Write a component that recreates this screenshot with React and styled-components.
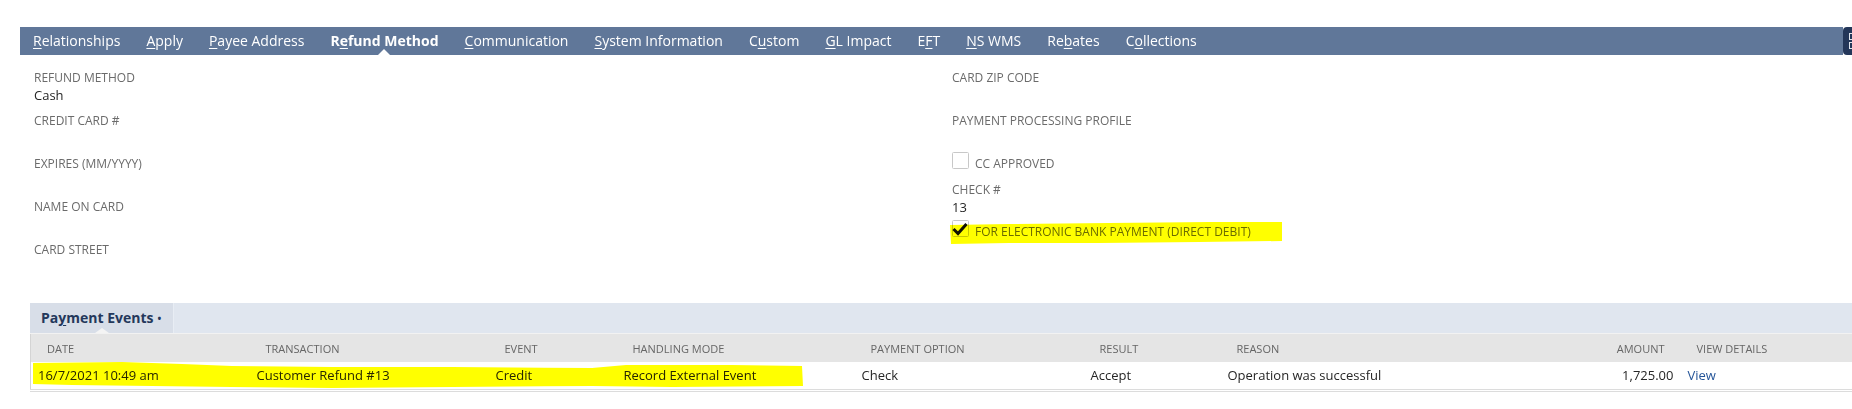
import styled, { createGlobalStyle } from 'styled-components';

const GlobalStyle = createGlobalStyle`
  body {
    margin: 0;
    background: #fff;
    font-family: "Open Sans", "Liberation Sans", sans-serif;
    overflow: hidden;
  }
`;

const Page = styled.div`
  width: 1870px;
  padding: 27px 0 0 20px;
  box-sizing: border-box;
`;

const TabBar = styled.div`
  display: flex;
  height: 28px;
`;

const Tabs = styled.div`
  flex: 1;
  display: flex;
  background: #607799;
`;

const Tab = styled.div`
  position: relative;
  padding: 0 13px;
  line-height: 28px;
  font-size: 14px;
  color: #fff;
  font-weight: ${(p) => (p.$active ? 700 : 400)};
  white-space: nowrap;

  &::after {
    content: '';
    display: ${(p) => (p.$active ? 'block' : 'none')};
    position: absolute;
    left: 50%;
    bottom: 0;
    margin-left: -6px;
    border-left: 6px solid transparent;
    border-right: 6px solid transparent;
    border-bottom: 6px solid #fff;
  }
`;

const Key = styled.span`
  text-decoration: underline;
  text-underline-offset: 2px;
`;

const ExpandButton = styled.div`
  width: 27px;
  box-sizing: border-box;
  background: #233659;
  border-radius: 4px 0 0 4px;
  display: flex;
  align-items: center;
  padding-left: 6px;
`;

const FieldGrid = styled.div`
  display: grid;
  grid-template-columns: 918px 1fr;
  padding: 15px 0 0 14px;
`;

const Column = styled.div`
  display: flex;
  flex-direction: column;
`;

const Field = styled.div`
  margin-bottom: ${(p) => p.$mb ?? 9}px;
`;

const Label = styled.div`
  font-size: 12px;
  line-height: 16px;
  color: #6b6b6b;
  text-transform: uppercase;
`;

const Value = styled.div`
  font-size: 13px;
  line-height: 18px;
  min-height: 18px;
  color: #262626;
`;

const CheckRow = styled.div`
  position: relative;
  display: flex;
  align-items: flex-end;
  gap: 6px;
  height: 17px;
  margin-top: ${(p) => p.$mt ?? 0}px;
  margin-bottom: ${(p) => p.$mb ?? 0}px;
`;

const CheckLabel = styled.span`
  font-size: 12px;
  line-height: 14px;
  margin-bottom: -2px;
  color: #6b6b6b;
  text-transform: uppercase;
  white-space: nowrap;
`;

const Marker = styled.svg`
  position: absolute;
  left: ${(p) => p.$x}px;
  top: ${(p) => p.$y}px;
  mix-blend-mode: multiply;
  pointer-events: none;
`;

const Section = styled.div`
  margin: 18px 0 0 10px;
`;

const SectionHeader = styled.div`
  display: flex;
  height: 30px;
  background: #e0e6ef;
`;

const SectionTab = styled.div`
  position: relative;
  padding: 0 12px 0 11px;
  background: #d8dee8;
  border-right: 1px solid #e8edf4;
  line-height: 30px;
  font-size: 14px;
  font-weight: 700;
  color: #24385b;

  &::after {
    content: '';
    position: absolute;
    left: 50%;
    bottom: 0;
    margin-left: -7px;
    border-left: 7px solid transparent;
    border-right: 7px solid transparent;
    border-bottom: 5px solid #f4f4f4;
  }
`;

const Dot = styled.span`
  font-size: 10px;
  margin-left: 4px;
  vertical-align: 1px;
`;

const TableWrap = styled.div`
  position: relative;
`;

const Table = styled.table`
  width: 100%;
  table-layout: fixed;
  border-collapse: collapse;
  border-left: 1px solid #d4d4d4;
`;

const HeadCell = styled.th`
  height: 28px;
  padding: 0 16px;
  background: #e5e5e5;
  border-top: 1px solid #f2f2f2;
  font-size: 11px;
  font-weight: 400;
  color: #666;
  text-align: ${(p) => p.$align || 'left'};
  white-space: nowrap;
`;

const Cell = styled.td`
  height: 26px;
  padding: 0 7px 1px;
  font-size: 13px;
  color: #262626;
  text-align: ${(p) => p.$align || 'left'};
  white-space: nowrap;
  border-bottom: 3px double #dcdcdc;
`;

const Link = styled.span`
  color: #255599;
`;

const tabs = [
  { pre: '', key: 'R', post: 'elationships' },
  { pre: '', key: 'A', post: 'pply' },
  { pre: '', key: 'P', post: 'ayee Address' },
  { pre: 'R', key: 'e', post: 'fund Method', active: true },
  { pre: '', key: 'C', post: 'ommunication' },
  { pre: '', key: 'S', post: 'ystem Information' },
  { pre: 'C', key: 'u', post: 'stom' },
  { pre: '', key: 'G', post: 'L Impact' },
  { pre: 'E', key: 'F', post: 'T' },
  { pre: '', key: 'N', post: 'S WMS' },
  { pre: 'Re', key: 'b', post: 'ates' },
  { pre: 'C', key: 'o', post: 'llections' },
];

const columns = [
  { title: 'Date', width: 219 },
  { title: 'Transaction', width: 239 },
  { title: 'Event', width: 128 },
  { title: 'Handling Mode', width: 238 },
  { title: 'Payment Option', width: 229 },
  { title: 'Result', width: 137 },
  { title: 'Reason', width: 339 },
  { title: 'Amount', width: 121, align: 'right' },
  { title: 'View Details', width: 110 },
  { title: '' },
];

const Checkbox = ({ checked }) => (
  <svg width="17" height="17" viewBox="0 0 17 17">
    <rect x="0.5" y="0.5" width="16" height="16" rx="1" fill="#fff" stroke="#c8c8c8" />
    {checked && (
      <polyline points="1.5,9 6,13.5 14.5,4" fill="none" stroke="#111" strokeWidth="3" />
    )}
  </svg>
);

const App = () => {
  return (
    <Page>
      <GlobalStyle />
      <TabBar>
        <Tabs>
          {tabs.map((t) => (
            <Tab key={t.post} $active={t.active}>
              {t.pre}
              <Key>{t.key}</Key>
              {t.post}
            </Tab>
          ))}
        </Tabs>
        <ExpandButton>
          <svg width="10" height="18" viewBox="0 0 10 18">
            <rect x="0.5" y="1.5" width="7" height="6" fill="none" stroke="#dfe5ee" />
            <rect x="0.5" y="10.5" width="7" height="6" fill="none" stroke="#dfe5ee" />
          </svg>
        </ExpandButton>
      </TabBar>

      <FieldGrid>
        <Column>
          <Field>
            <Label>Refund Method</Label>
            <Value>Cash</Value>
          </Field>
          <Field>
            <Label>Credit Card #</Label>
            <Value />
          </Field>
          <Field>
            <Label>Expires (MM/YYYY)</Label>
            <Value />
          </Field>
          <Field>
            <Label>Name on Card</Label>
            <Value />
          </Field>
          <Field>
            <Label>Card Street</Label>
            <Value />
          </Field>
        </Column>
        <Column>
          <Field>
            <Label>Card Zip Code</Label>
            <Value />
          </Field>
          <Field>
            <Label>Payment Processing Profile</Label>
            <Value />
          </Field>
          <CheckRow $mt={-4} $mb={13}>
            <Checkbox />
            <CheckLabel>CC Approved</CheckLabel>
          </CheckRow>
          <Field $mb={4}>
            <Label>Check #</Label>
            <Value>13</Value>
          </Field>
          <CheckRow>
            <Checkbox checked />
            <CheckLabel>For Electronic Bank Payment (Direct Debit)</CheckLabel>
            <Marker $x={-3} $y={1} width="334" height="24" viewBox="0 0 334 24">
              <path
                d="M1,4 L60,3 L160,2 L260,1 L333,1 L333,20 L250,21 L150,22 L60,22 L2,23 Z"
                fill="#ffff00"
              />
            </Marker>
          </CheckRow>
        </Column>
      </FieldGrid>

      <Section>
        <SectionHeader>
          <SectionTab>
            Pa<Key>y</Key>ment Events<Dot>•</Dot>
          </SectionTab>
        </SectionHeader>
        <TableWrap>
          <Table>
            <colgroup>
              {columns.map((c, i) => (
                <col key={i} style={c.width ? { width: c.width } : undefined} />
              ))}
            </colgroup>
            <thead>
              <tr>
                {columns.map((c, i) => (
                  <HeadCell key={i} $align={c.align}>
                    {c.title.toUpperCase()}
                  </HeadCell>
                ))}
              </tr>
            </thead>
            <tbody>
              <tr>
                <Cell>16/7/2021 10:49 am</Cell>
                <Cell>Customer Refund #13</Cell>
                <Cell>Credit</Cell>
                <Cell>Record External Event</Cell>
                <Cell>Check</Cell>
                <Cell>Accept</Cell>
                <Cell>Operation was successful</Cell>
                <Cell $align="right">1,725.00</Cell>
                <Cell>
                  <Link>View</Link>
                </Cell>
                <Cell />
              </tr>
            </tbody>
          </Table>
          <Marker $x={2} $y={28} width="775" height="30" viewBox="0 0 775 30">
            <path
              d="M1,2 L90,1 L150,3 L200,5 L300,6 L420,6 L560,7 L594,4 L700,4 L770,5 L771,25 L640,26 L560,25 L420,26 L300,27 L200,26 L120,25 L40,24 L1,23 Z"
              fill="#ffff00"
            />
          </Marker>
        </TableWrap>
      </Section>
    </Page>
  );
};

export default App;
